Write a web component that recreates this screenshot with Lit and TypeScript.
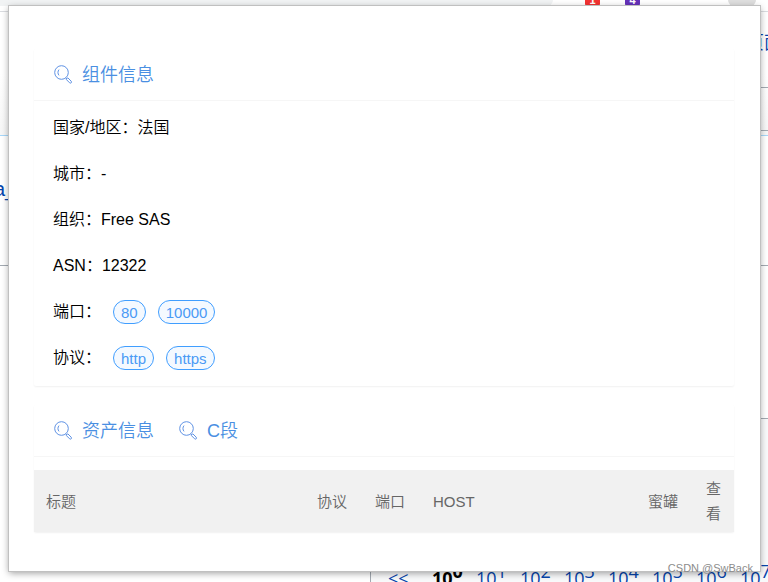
import { LitElement, html, css, svg } from "lit";
import { customElement } from "lit/decorators.js";

@customElement("search-icon")
class SearchIcon extends LitElement {
  static styles = css`
    :host { display: block; width: 20px; height: 20px; }
    svg { display: block; width: 20px; height: 20px; fill: none; stroke: #5f92e4; stroke-width: 1; }
  `;
  render() {
    return html`<svg viewBox="0 0 20 20" aria-hidden="true">
      ${svg`<circle cx="8.5" cy="7.5" r="6.8"/>
      <path d="M6 4.6C4.6 6.2 4.6 8.8 6 10.4"/>
      <path d="M12.8 12.8l1 1.2M13.2 14.4l3.4 3.4q.9.7 1.6 0t0-1.6l-3.4-3.4z" stroke-linejoin="round"/>`}
    </svg>`;
  }
}

@customElement("backdrop-page")
class BackdropPage extends LitElement {
  static styles = css`
    :host {
      display: flex;
      flex-direction: column;
      height: 100%;
      overflow: hidden;
      color: #0645ad;
      font-size: 18px;
    }
    .chrome { height: 12px; flex: none; display: flex; background: #fff; border-bottom: 1px solid #dadce0; box-sizing: border-box; }
    .omnibox { width: 72%; height: 6px; background: #f1f3f4; border-radius: 0 0 16px 0; }
    .ext { width: 15px; height: 6px; color: #fff; font-size: 11px; line-height: 0; text-align: center; font-weight: bold; border-radius: 0 0 2px 2px; overflow: hidden; }
    .red { background: #f33333; margin-left: 32px; }
    .purple { background: #6633b9; margin-left: 25px; }
    .avatar { width: 28px; height: 6px; margin-left: 88px; background: #dedede; border-radius: 0 0 14px 14px; }
    .top { height: 123px; flex: none; display: flex; flex-direction: column; align-items: flex-end; background: linear-gradient(#fff 50%, #f6f6f6); border-bottom: 1px solid #a7d7f9; }
    .edge { width: 22px; padding-top: 18px; height: 57px; line-height: 26px; overflow: hidden; border-bottom: 1px solid #a2a9b1; white-space: nowrap; }
    .field { width: 22px; height: 42px; border-bottom: 1px solid #a2a9b1; }
    .name { height: 130px; flex: none; box-sizing: border-box; padding-top: 40px; border-bottom: 1px solid #a2a9b1; line-height: 26px; font-size: 20px; }
    .name span { display: block; width: 24px; margin-left: -6px; white-space: nowrap; }
    .rest { flex: 1; min-height: 0; display: flex; align-items: flex-end; }
    .powers { flex: 1; min-width: 0; height: 163px; margin-left: 370px; border-left: 1px solid #a2a9b1; border-top: 1px solid #a2a9b1; background: #f8f9fa; display: flex; align-items: flex-end; overflow: hidden; font-family: "Open Sans", sans-serif; }
    .list { display: flex; margin-left: 17px; height: 20px; line-height: 32px; }
    .list a { flex: none; width: 44px; color: inherit; text-decoration: none; white-space: nowrap; }
    .list a.on { color: #000; font-weight: bold; }
    sup { font-size: 18px; line-height: 0; vertical-align: 7px; }
  `;
  render() {
    return html`
      <div class="chrome">
        <div class="omnibox"></div>
        <div class="ext red">1</div>
        <div class="ext purple">4</div>
        <div class="avatar"></div>
      </div>
      <div class="top"><div class="edge">页面</div><div class="field"></div></div>
      <div class="name"><span>a_</span></div>
      <div class="rest">
        <div class="powers">
          <div class="list">
            <a href="#">&lt;&lt;</a>
            ${[0, 1, 2, 3, 4, 5, 6, 7].map((n) => html`<a href="#" class=${n === 0 ? "on" : ""}>10<sup>${n}</sup></a>`)}
          </div>
        </div>
      </div>`;
  }
}

@customElement("app-root")
class AppRoot extends LitElement {
  static styles = css`
    * { box-sizing: border-box; }
    :host {
      display: grid;
      height: 100vh;
      overflow: hidden;
      background: #fff;
      font-family: "Liberation Sans", "Noto Sans CJK SC", sans-serif;
      color: #000;
    }
    backdrop-page, .layer { grid-area: 1 / 1; min-width: 0; min-height: 0; }
    .layer { position: relative; padding: 6px 8px 11px 9px; }
    .popup {
      height: 100%;
      padding: 43px 26px 0 25px;
      background: #fff;
      outline: 1px solid #c0c0c0;
      box-shadow: 0 2px 7px rgba(0, 0, 0, 0.4);
    }
    .card { background: #fff; border-radius: 2px; box-shadow: 0 1px 2px rgba(0, 0, 0, 0.06); }
    .card + .card { margin-top: 19px; }
    .head { display: flex; gap: 24px; height: 52px; padding: 0 19px; border-bottom: 1px solid #f6f6f6; }
    h2 { margin: 0; display: flex; align-items: center; gap: 9px; font-size: 18px; font-weight: 350; line-height: 24px; color: #4a8fe2; }
    dl { margin: 0; padding: 4px 19px 5px; font-size: 16px; font-weight: 350; line-height: 24px; }
    .row { display: flex; align-items: center; height: 46px; }
    dt { flex: none; }
    dd { margin: 0; display: flex; gap: 12px; }
    .tags { margin-left: 12px; }
    .tag { height: 24px; padding: 0 7px; border: 1px solid #409eff; border-radius: 12px; background: #f4f9ff; color: #4a9af5; font-size: 15px; line-height: 24px; }
    table { width: 100%; margin-top: 13px; border-collapse: collapse; table-layout: fixed; background: #f1f1f1; color: #666; font-size: 15px; line-height: 25px; }
    th { height: 62px; padding: 0 12px; font-weight: 350; text-align: left; }
    .protocol { width: 58px; }
    .port { width: 58px; }
    .host { width: 215px; }
    .honeypot { width: 58px; }
    .view { width: 40px; }
    .mark { position: absolute; right: 15px; bottom: 7px; font-size: 11px; line-height: 14px; color: #8c8c8c; }
  `;
  info = [
    ["国家/地区：", "法国"],
    ["城市：", "-"],
    ["组织：", "Free SAS"],
    ["ASN：", "12322"],
  ];
  tags: [string, string[]][] = [
    ["端口：", ["80", "10000"]],
    ["协议：", ["http", "https"]],
  ];
  render() {
    return html`
      <backdrop-page></backdrop-page>
      <div class="layer">
        <main class="popup">
          <section class="card">
            <div class="head"><h2><search-icon></search-icon>组件信息</h2></div>
            <dl>
              ${this.info.map(([k, v]) => html`<div class="row"><dt>${k}</dt><dd>${v}</dd></div>`)}
              ${this.tags.map(([k, v]) => html`<div class="row"><dt>${k}</dt><dd class="tags">${v.map((t) => html`<span class="tag">${t}</span>`)}</dd></div>`)}
            </dl>
          </section>
          <section class="card">
            <div class="head">
              <h2><search-icon></search-icon>资产信息</h2>
              <h2><search-icon></search-icon>C段</h2>
            </div>
            <table>
              <thead><tr>
                <th>标题</th>
                <th class="protocol">协议</th>
                <th class="port">端口</th>
                <th class="host">HOST</th>
                <th class="honeypot">蜜罐</th>
                <th class="view">查看</th>
              </tr></thead>
            </table>
          </section>
        </main>
        <div class="mark">CSDN @SwBack</div>
      </div>`;
  }
}
